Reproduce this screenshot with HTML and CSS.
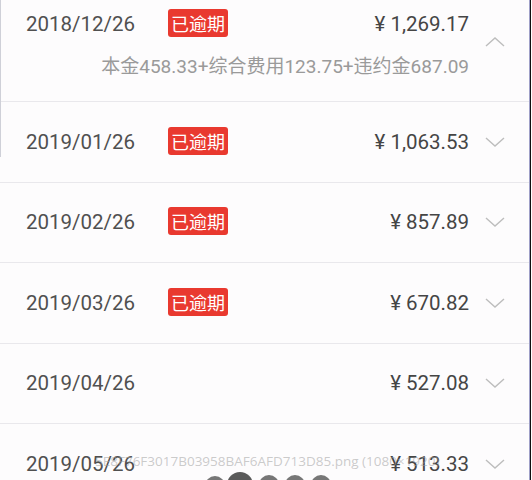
FILE: index.html
```html
<!DOCTYPE html>
<html lang="zh-CN">
<head>
<meta charset="utf-8">
<link rel="stylesheet" href="styles.css">
</head>
<body>
<div class="screen">
  <div class="edge-left"></div>
  <div class="edge-right"></div>
  <ul class="list">
    <li class="row row-open">
      <div class="row-main">
        <div class="line">
          <span class="date">2018/12/26</span>
          <span class="badge">已逾期</span>
          <span class="amount">¥ 1,269.17</span>
        </div>
        <div class="detail">本金458.33+综合费用123.75+违约金687.09</div>
      </div>
      <svg class="chev" viewBox="0 0 20 10"><polyline points="1,9 10,1 19,9"/></svg>
    </li>
    <li class="row">
      <div class="row-main">
        <div class="line">
          <span class="date">2019/01/26</span>
          <span class="badge">已逾期</span>
          <span class="amount">¥ 1,063.53</span>
        </div>
      </div>
      <svg class="chev" viewBox="0 0 20 10"><polyline points="1,1 10,9 19,1"/></svg>
    </li>
    <li class="row">
      <div class="row-main">
        <div class="line">
          <span class="date">2019/02/26</span>
          <span class="badge">已逾期</span>
          <span class="amount">¥ 857.89</span>
        </div>
      </div>
      <svg class="chev" viewBox="0 0 20 10"><polyline points="1,1 10,9 19,1"/></svg>
    </li>
    <li class="row">
      <div class="row-main">
        <div class="line">
          <span class="date">2019/03/26</span>
          <span class="badge">已逾期</span>
          <span class="amount">¥ 670.82</span>
        </div>
      </div>
      <svg class="chev" viewBox="0 0 20 10"><polyline points="1,1 10,9 19,1"/></svg>
    </li>
    <li class="row">
      <div class="row-main">
        <div class="line">
          <span class="date">2019/04/26</span>
          <span class="amount">¥ 527.08</span>
        </div>
      </div>
      <svg class="chev" viewBox="0 0 20 10"><polyline points="1,1 10,9 19,1"/></svg>
    </li>
    <li class="row">
      <div class="row-main">
        <div class="line">
          <span class="date">2019/05/26</span>
          <span class="amount">¥ 513.33</span>
        </div>
      </div>
      <svg class="chev" viewBox="0 0 20 10"><polyline points="1,1 10,9 19,1"/></svg>
    </li>
  </ul>
  <div class="watermark">5E8F76F3017B03958BAF6AFD713D85.png (1080×1920)</div>
  <div class="dots">
    <span class="dot d1"></span>
    <span class="dot d2"></span>
    <span class="dot d3"></span>
    <span class="dot d4"></span>
    <span class="dot d5"></span>
  </div>
</div>
</body>
</html>
```
FILE: styles.css
```css
* { box-sizing: border-box; }
html, body {
  margin: 0;
  padding: 0;
  background: #fdfcfd;
  overflow: hidden;
}
body {
  font-family: Roboto, "Noto Sans CJK SC", sans-serif;
  width: 532px;
  height: 480px;
}
.screen {
  position: relative;
  width: 532px;
  height: 480px;
  overflow: hidden;
  background: #fdfcfd;
}
.edge-left {
  position: absolute;
  left: 0;
  top: 0;
  width: 1px;
  height: 157px;
  background: #cfd0d8;
}
.edge-right {
  position: absolute;
  left: 529px;
  top: 0;
  width: 3px;
  height: 480px;
  border-left: 1px solid #9fa0c8;
  background: #111;
  border-right: 1px solid #fff;
}
.list {
  list-style: none;
  margin: -19px 0 0 0;
  padding: 0;
  width: 530px;
}
.row {
  display: flex;
  align-items: center;
  height: 80.5px;
  border-bottom: 1px solid #e9e8ec;
  padding: 0 0 0 26px;
}
.row-open {
  height: 121px;
  padding-top: 1px;
}
.row-main {
  flex: 1;
  display: flex;
  flex-direction: column;
}
.line {
  display: flex;
  align-items: center;
  height: 40px;
}
.date {
  width: 142px;
  font-size: 20.5px;
  color: #505050;
}
.badge {
  display: inline-flex;
  align-items: center;
  height: 28px;
  padding: 0 3px;
  border-radius: 3px;
  background: #e9392f;
  color: #fff;
  font-size: 18px;
  font-family: "Noto Sans CJK SC", sans-serif;
  margin-top: -2px;
}
.amount {
  margin-left: auto;
  font-size: 20.5px;
  color: #454545;
}
.detail {
  margin-top: 10px;
  height: 26px;
  line-height: 26px;
  text-align: right;
  font-size: 19px;
  color: #9a9a9a;
  white-space: nowrap;
}
.chev {
  width: 20px;
  height: 10px;
  margin: 0 25px 0 16px;
  fill: none;
  stroke: #bdbdbd;
  stroke-width: 1.4;
  flex: none;
}
.watermark {
  position: absolute;
  left: 95px;
  top: 452px;
  font-family: "Open Sans", sans-serif;
  font-size: 13.5px;
  color: rgba(160, 160, 160, 0.55);
  white-space: nowrap;
}
.dots {
  position: absolute;
  left: 205px;
  top: 473px;
  display: flex;
  gap: 6px;
  align-items: flex-start;
}
.dot {
  width: 20px;
  height: 20px;
  border-radius: 50%;
  background: #6f6f6f;
}
.d1 { margin-top: 3px; margin-right: -4px; background: #777; }
.d2 { width: 26px; height: 26px; margin-top: -1px; background: #5a5a5a; }
.d3 { margin-top: 2px; background: #767676; }
.d4 { margin-top: 2px; background: #777; }
.d5 { margin-top: 2px; background: #777; }
```
